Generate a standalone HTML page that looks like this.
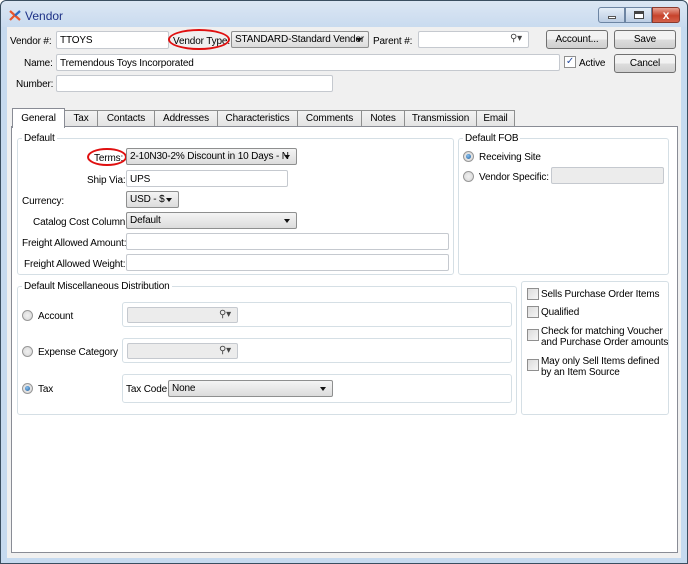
<!DOCTYPE html>
<html><head><meta charset="utf-8"><style>
*{box-sizing:border-box;margin:0;padding:0}
body{width:688px;height:564px;overflow:hidden;background:#fff;font-family:"Liberation Sans",sans-serif;font-size:10px;letter-spacing:-0.15px;color:#000;position:relative}
.a{position:absolute;white-space:nowrap}
.t{margin-top:1px}
.in{position:absolute;background:#fff;border:1px solid #c5c9cf;border-radius:2px;white-space:nowrap;overflow:hidden}
.cb{position:absolute;background:linear-gradient(#f4f4f4,#dcdcdc);border:1px solid #8e8f8f;border-radius:2px;padding:2px 14px 1px 3px;line-height:12px;white-space:nowrap;overflow:hidden}
.cb:after{content:"";position:absolute;right:6px;top:6px;border-left:3.5px solid transparent;border-right:3.5px solid transparent;border-top:4px solid #111}
.btn{position:absolute;background:linear-gradient(#f2f2f2 50%,#dddddd 50%,#cfcfcf);border:1px solid #707070;border-radius:3px;text-align:center;line-height:17px}
.tab{position:absolute;top:110px;height:17px;background:linear-gradient(#f3f3f3,#e3e3e3);border:1px solid #8e8f8f;border-bottom:none;text-align:center;line-height:16px}
.grp{position:absolute;border:1px solid #d5dfe5;border-radius:3px}
.gl{position:absolute;background:#fff;padding:0 2px;line-height:12px}
.rd{position:absolute;width:11px;height:11px;border-radius:50%;border:1px solid #979797;background:radial-gradient(#f0f0f0,#d6d6d6)}
.rd.on:after{content:"";position:absolute;left:2px;top:2px;width:5px;height:5px;border-radius:50%;background:radial-gradient(circle at 40% 35%,#8cc2f0,#1b5c9c)}
.ck{position:absolute;width:12px;height:12px;border:1px solid #8f8f8f;background:linear-gradient(135deg,#dcdcdc,#f6f6f6)}
.el{position:absolute;border:2px solid #e01010;border-radius:50%}
.srch{position:absolute;right:6px;top:1px;color:#444;font-size:10px}
</style></head><body>
<div class="a" style="left:0;top:0;width:688px;height:564px;background:#c6daef;border:1px solid #3a4e60;border-radius:6px 6px 0 0"></div>
<div class="a" style="left:1px;top:1px;width:686px;height:26px;background:linear-gradient(#dbe6f3,#c9dbef);border-radius:6px 6px 0 0"></div>
<svg class="a" style="left:9px;top:10px" width="12" height="11"><path d="M1 1 L11 10 M1 10 L5 6" stroke="#e8552b" stroke-width="2.2"/><path d="M11 1 L6 5.5" stroke="#2e6bbf" stroke-width="2.2"/></svg>
<div class="a" style="left:25px;top:9px;font-size:12px;letter-spacing:0;color:#1e3287">Vendor</div>
<div class="a" style="left:598px;top:7px;width:27px;height:16px;border:1px solid #6d85a3;border-radius:3px 0 0 3px;background:linear-gradient(#e4edf7,#bccde3)"><div class="a" style="left:9px;top:8px;width:8px;height:3px;background:#fff;border:1px solid #555"></div></div>
<div class="a" style="left:625px;top:7px;width:27px;height:16px;border:1px solid #6d85a3;background:linear-gradient(#e4edf7,#bccde3)"><div class="a" style="left:8px;top:3px;width:10px;height:8px;border:1px solid #444;border-top:3px solid #444;background:#fff"></div></div>
<div class="a" style="left:652px;top:7px;width:28px;height:16px;border:1px solid #8a3a2e;border-radius:0 3px 3px 0;background:linear-gradient(#e8a394,#c7432c 55%,#d4614a);color:#fff;font-weight:bold;text-align:center;line-height:14px;font-size:12px">x</div>
<div class="a" style="left:7px;top:27px;width:674px;height:531px;background:#f0f0f0"></div>

<div class="a t" style="left:10px;top:35px">Vendor #:</div>
<div class="in" style="left:56px;top:31px;width:113px;height:18px;padding:3px 3px">TTOYS</div>
<div class="a t" style="left:173px;top:35px">Vendor Type:</div>
<div class="el" style="left:168px;top:29px;width:62px;height:21px"></div>
<div class="cb" style="left:231px;top:31px;width:138px;height:17px">STANDARD-Standard Vendor</div>
<div class="a t" style="left:373px;top:35px">Parent #:</div>
<div class="in" style="left:418px;top:31px;width:111px;height:17px"><span class="srch">⚲▾</span></div>
<div class="btn" style="left:546px;top:30px;width:62px;height:19px">Account...</div>
<div class="btn" style="left:614px;top:30px;width:62px;height:19px">Save</div>

<div class="a t" style="left:24px;top:57px">Name:</div>
<div class="in" style="left:56px;top:54px;width:504px;height:17px;padding:3px 3px">Tremendous Toys Incorporated</div>
<div class="ck" style="left:564px;top:56px;background:#fff;color:#2b4fa0;font-size:10px;line-height:9px;text-align:center">✓</div>
<div class="a t" style="left:579px;top:57px">Active</div>
<div class="btn" style="left:614px;top:54px;width:62px;height:19px">Cancel</div>

<div class="a t" style="left:16px;top:78px">Number:</div>
<div class="in" style="left:56px;top:75px;width:277px;height:17px"></div>

<div class="tab" style="left:64px;width:34px">Tax</div>
<div class="tab" style="left:97px;width:58px">Contacts</div>
<div class="tab" style="left:154px;width:64px">Addresses</div>
<div class="tab" style="left:217px;width:81px">Characteristics</div>
<div class="tab" style="left:297px;width:65px">Comments</div>
<div class="tab" style="left:361px;width:44px">Notes</div>
<div class="tab" style="left:404px;width:73px">Transmission</div>
<div class="tab" style="left:476px;width:39px">Email</div>
<div class="a" style="left:11px;top:126px;width:667px;height:427px;background:#fff;border:1px solid #898c95"></div>
<div class="tab" style="left:12px;top:108px;width:53px;height:20px;background:#fff;line-height:19px;border-color:#898c95">General</div>

<div class="grp" style="left:17px;top:138px;width:437px;height:137px"></div>
<div class="gl t" style="left:22px;top:132px">Default</div>
<div class="a t" style="left:94px;top:152px">Terms:</div>
<div class="el" style="left:87px;top:148px;width:40px;height:18px"></div>
<div class="cb" style="left:126px;top:148px;width:171px;height:17px">2-10N30-2% Discount in 10 Days - N</div>
<div class="a t" style="left:87px;top:174px">Ship Via:</div>
<div class="in" style="left:126px;top:170px;width:162px;height:17px;padding:3px 3px">UPS</div>
<div class="a t" style="left:22px;top:195px">Currency:</div>
<div class="cb" style="left:126px;top:191px;width:53px;height:17px">USD - $</div>
<div class="a t" style="left:33px;top:216px">Catalog Cost Column:</div>
<div class="cb" style="left:126px;top:212px;width:171px;height:17px">Default</div>
<div class="a t" style="left:22px;top:237px">Freight Allowed Amount:</div>
<div class="in" style="left:126px;top:233px;width:323px;height:17px"></div>
<div class="a t" style="left:24px;top:258px">Freight Allowed Weight:</div>
<div class="in" style="left:126px;top:254px;width:323px;height:17px"></div>

<div class="grp" style="left:458px;top:138px;width:211px;height:137px"></div>
<div class="gl t" style="left:463px;top:132px">Default FOB</div>
<div class="rd on" style="left:463px;top:151px"></div>
<div class="a t" style="left:479px;top:151px">Receiving Site</div>
<div class="rd" style="left:463px;top:171px"></div>
<div class="a t" style="left:479px;top:171px">Vendor Specific:</div>
<div class="in" style="left:551px;top:167px;width:113px;height:17px;background:#ececec"></div>

<div class="grp" style="left:17px;top:286px;width:500px;height:129px"></div>
<div class="gl t" style="left:22px;top:280px">Default Miscellaneous Distribution</div>
<div class="grp" style="left:122px;top:302px;width:390px;height:25px"></div>
<div class="grp" style="left:122px;top:338px;width:390px;height:25px"></div>
<div class="grp" style="left:122px;top:374px;width:390px;height:29px"></div>
<div class="rd" style="left:22px;top:310px"></div><div class="a t" style="left:38px;top:310px">Account</div>
<div class="rd" style="left:22px;top:346px"></div><div class="a t" style="left:38px;top:346px">Expense Category</div>
<div class="rd on" style="left:22px;top:383px"></div><div class="a t" style="left:38px;top:383px">Tax</div>
<div class="in" style="left:127px;top:307px;width:111px;height:16px;background:#ececec"><span class="srch">⚲▾</span></div>
<div class="in" style="left:127px;top:343px;width:111px;height:16px;background:#ececec"><span class="srch">⚲▾</span></div>
<div class="a t" style="left:126px;top:383px">Tax Code</div>
<div class="cb" style="left:168px;top:380px;width:165px;height:17px">None</div>

<div class="grp" style="left:521px;top:281px;width:148px;height:134px"></div>
<div class="ck" style="left:527px;top:288px"></div><div class="a t" style="left:541px;top:288px">Sells Purchase Order Items</div>
<div class="ck" style="left:527px;top:306px"></div><div class="a t" style="left:541px;top:306px">Qualified</div>
<div class="ck" style="left:527px;top:329px"></div><div class="a t" style="left:541px;top:325px;line-height:11px">Check for matching Voucher<br>and Purchase Order amounts</div>
<div class="ck" style="left:527px;top:359px"></div><div class="a t" style="left:541px;top:355px;line-height:11px">May only Sell Items defined<br>by an Item Source</div>
</body></html>
